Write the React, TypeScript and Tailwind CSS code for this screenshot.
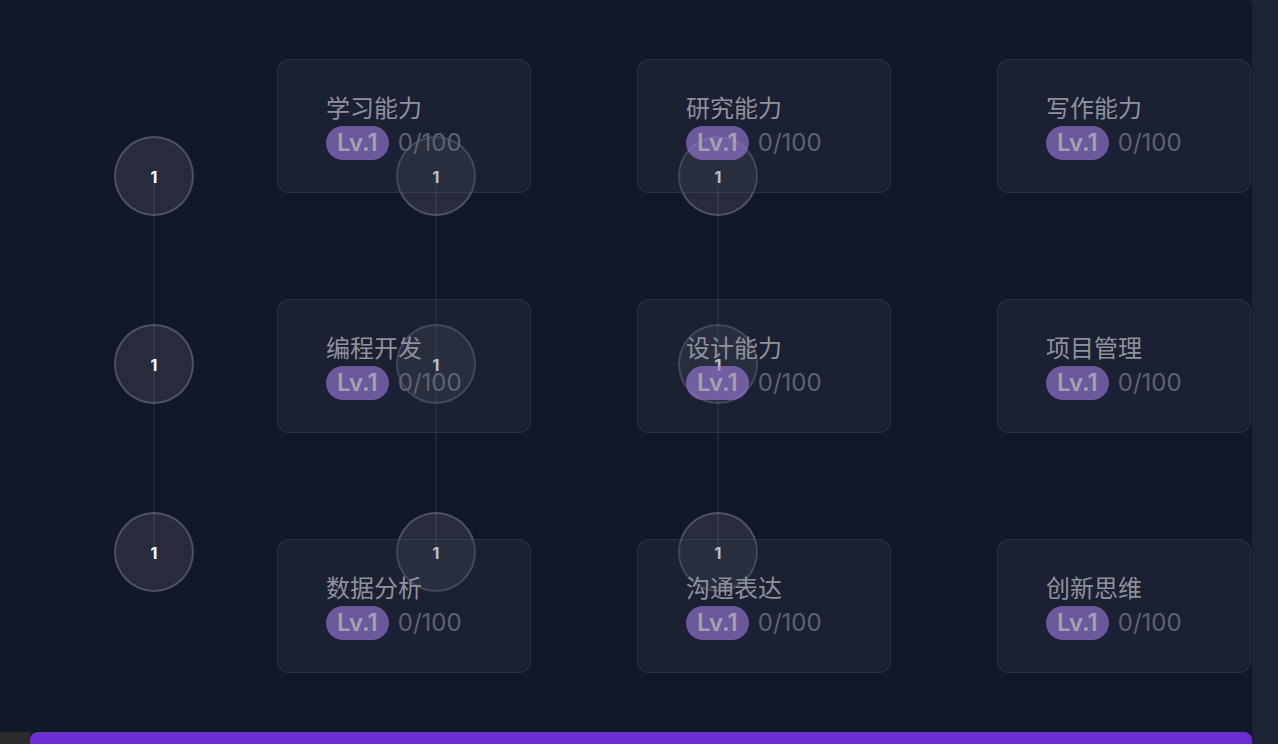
const skills = [
  "学习能力", "研究能力", "写作能力",
  "编程开发", "设计能力", "项目管理",
  "数据分析", "沟通表达", "创新思维",
];

const nodeCols = [114, 396, 678];
const nodeRows = [136, 324, 512];

const SkillCard = ({title}: {title: string}) => (
  <div className="h-[134px] rounded-xl border border-white/[0.07] bg-[rgba(47,52,72,0.32)] flex flex-col justify-center pl-[48px] pt-[3px] gap-[2px]">
    <div className="text-[24px] leading-[29px] text-[#8f929c]">{title}</div>
    <div className="flex items-center gap-[9px]">
      <span className="rounded-full bg-[rgba(156,122,222,0.62)] px-[11px] h-[34px] flex items-center text-[24px] font-semibold text-[#a3a1ad]">
        Lv.1
      </span>
      <span className="text-[24px] text-[#5e6272]">0/100</span>
    </div>
  </div>
);

const App = () => {
  return (
    <div
      className="w-[1278px] h-[744px] flex flex-col bg-[#1d2234] overflow-hidden"
      style={{fontFamily: 'Inter, "Noto Sans CJK SC", sans-serif'}}
    >
      <div className="flex h-[732px]">
        <div className="relative w-[1252px] h-full bg-[#121729] rounded-tr-md">
          {/* skill tree nodes */}
          {nodeCols.map(x => (
            <div key={"l" + x}>
              <div
                className="absolute w-[2px] bg-white/[0.06]"
                style={{left: x + 39, top: 177, height: 376}}
              />
              {nodeRows.map(y => (
                <div
                  key={y}
                  className="absolute w-[80px] h-[80px] pt-[2px] rounded-full border-2 border-white/[0.18] bg-white/[0.09] flex items-center justify-center text-[16px] font-bold text-white"
                  style={{left: x, top: y}}
                >
                  1
                </div>
              ))}
            </div>
          ))}
          <div className="relative grid grid-cols-[repeat(3,254px)] gap-x-[106px] gap-y-[106px] pt-[59px] pl-[277px]">
            {skills.map(s => <SkillCard key={s} title={s}/>)}
          </div>
        </div>
        <div className="flex-1"/>
      </div>
      <div className="flex h-[12px]">
        <div className="w-[30px] bg-[#2b2b2b]"/>
        <div className="w-[1222px] bg-[#121729]">
          <div className="h-full rounded-t-lg bg-[#6d2ed6]"/>
        </div>
        <div className="flex-1"/>
      </div>
    </div>
  );
};

export default App;
